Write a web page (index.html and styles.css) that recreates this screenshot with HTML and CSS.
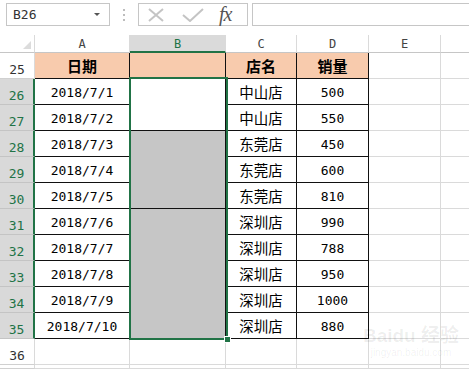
FILE: index.html
```html
<!DOCTYPE html>
<html lang="zh-CN">
<head>
    <meta charset="UTF-8">
    <title>店铺销量表</title>
    <link rel="stylesheet" href="styles.css">
</head>
<body>

    <div class="formula-bar">
        <div class="name-box">
            <span>B26</span>
            <span class="drop"></span>
        </div>
        <div class="grip">
            <svg width="3" height="12" viewBox="0 0 3 12"><rect x="0" y="0" width="2" height="2"/><rect x="0" y="5" width="2" height="2"/><rect x="0" y="10" width="2" height="2"/></svg>
        </div>
        <div class="fx-box">
            <svg class="btn-cancel" width="16" height="14" viewBox="0 0 16 14"><path d="M1 1 L15 13 M15 1 L1 13"/></svg>
            <svg class="btn-enter" width="22" height="14" viewBox="0 0 22 14"><path d="M1 7 L8 13 L21 1"/></svg>
            <span class="fx">fx</span>
        </div>
        <div class="formula-input"></div>
    </div>

    <div class="sheet" id="sheet">
        <div class="selection"><span class="fill-handle"></span></div>
    </div>

    <div class="watermark">
        <div class="wm-big">Bai<span>du</span> 经验</div>
        <div class="wm-small">jingyan.baidu.com</div>
    </div>

    <script>
        const sales = [
            { date: "2018/7/1", store: "中山店", qty: "500" },
            { date: "2018/7/2", store: "中山店", qty: "550" },
            { date: "2018/7/3", store: "东莞店", qty: "450" },
            { date: "2018/7/4", store: "东莞店", qty: "600" },
            { date: "2018/7/5", store: "东莞店", qty: "810" },
            { date: "2018/7/6", store: "深圳店", qty: "990" },
            { date: "2018/7/7", store: "深圳店", qty: "788" },
            { date: "2018/7/8", store: "深圳店", qty: "950" },
            { date: "2018/7/9", store: "深圳店", qty: "1000" },
            { date: "2018/7/10", store: "深圳店", qty: "880" }
        ];

        // merged blocks in column B, keyed by first row index
        const merged = {
            0: "merge-2 blank",
            2: "merge-3 shade",
            5: "merge-5 shade"
        };

        const sheet = document.getElementById('sheet');

        function cell(cls, text) {
            const el = document.createElement('div');
            el.className = 'c ' + cls;
            if (text) el.textContent = text;
            sheet.appendChild(el);
            return el;
        }

        // column headers
        cell('corner', '');
        ['A', 'B', 'C', 'D', 'E', ''].forEach(letter => {
            cell(letter === 'B' ? 'col-head active' : 'col-head', letter);
        });

        // row 25: table header
        cell('row-head', '25');
        cell('data head', '日期');
        cell('data head', '');
        cell('data head', '店名');
        cell('data head', '销量');
        cell('', '');
        cell('', '');

        sales.forEach((row, i) => {
            cell('row-head active', String(26 + i));
            cell('data num', row.date);
            if (merged[i]) cell('data ' + merged[i], '');
            cell('data zh', row.store);
            cell('data num', row.qty);
            cell('', '');
            cell('', '');
        });

        // empty row below the table
        cell('row-head', '36');
        for (let k = 0; k < 6; k++) cell('', '');

        // top sliver of row 37 at the window edge
        cell('row-head', '');
        for (let k = 0; k < 6; k++) cell('', '');
    </script>

</body>
</html>
```

FILE: styles.css
```css
body {
    margin: 0;
    width: 469px;
    height: 369px;
    overflow: hidden;
    position: relative;
    background-color: #fff;
    font-family: "DejaVu Sans Mono", "Noto Sans CJK SC", monospace;
    color: #000;
}

/* formula bar */
.formula-bar {
    display: flex;
    align-items: flex-start;
    height: 35px;
    padding-top: 3px;
    box-sizing: border-box;
}
.name-box {
    margin-left: 6px;
    width: 104px;
    height: 23px;
    box-sizing: border-box;
    border: 1px solid #c6c6c6;
    display: flex;
    align-items: center;
    justify-content: space-between;
    padding: 0 9px 0 6px;
    font-size: 13px;
    color: #333;
}
.drop {
    width: 0;
    height: 0;
    border-left: 3px solid transparent;
    border-right: 3px solid transparent;
    border-top: 3px solid #555;
}
.grip {
    width: 28px;
    height: 23px;
    display: flex;
    align-items: center;
    justify-content: center;
}
.grip svg {
    fill: #bdbdbd;
}
.fx-box {
    width: 110px;
    height: 23px;
    box-sizing: border-box;
    border: 1px solid #c6c6c6;
    display: flex;
    align-items: center;
    padding-left: 9px;
}
.fx-box svg {
    fill: none;
    stroke: #c4c4c4;
    stroke-width: 2;
}
.btn-enter {
    margin-left: 18px;
}
.fx {
    margin-left: 15px;
    font-family: "Liberation Serif", serif;
    font-style: italic;
    font-size: 20px;
    color: #555;
    letter-spacing: -1px;
}
.formula-input {
    flex: 1;
    margin-left: 4px;
    height: 23px;
    box-sizing: border-box;
    border: 1px solid #c6c6c6;
    border-right: none;
}

/* worksheet grid */
.sheet {
    position: relative;
    display: grid;
    grid-template-columns: 35px 95px 96px 71px 72px 72px 40px;
    grid-template-rows: 18px repeat(12, 26px) 4px;
}
.c {
    box-sizing: border-box;
    border-right: 1px solid #dadada;
    border-bottom: 1px solid #dadada;
    display: flex;
    align-items: center;
    justify-content: center;
    white-space: nowrap;
}
.corner {
    position: relative;
    border-bottom-color: #c6c6c6;
}
.corner::after {
    content: "";
    position: absolute;
    right: 3px;
    bottom: 3px;
    border-left: 8px solid transparent;
    border-bottom: 8px solid #dcdcdc;
}
.col-head {
    font-size: 12px;
    color: #444;
    border-bottom-color: #c6c6c6;
    padding-top: 1px;
}
.col-head.active {
    background-color: #dadada;
    color: #217346;
    border-bottom: 2px solid #217346;
}
.row-head {
    align-items: flex-end;
    padding-bottom: 1px;
    font-size: 13px;
    color: #333;
    border-bottom-color: #d0d0d0;
}
.row-head.active {
    background-color: #d9d9d9;
    color: #217346;
    border-bottom-color: #c4c4c4;
    border-right: 2px solid #217346;
}

/* data table */
.data {
    border-right-color: #111;
    border-bottom-color: #111;
    padding-top: 2px;
}
.head {
    background-color: #f8cbad;
    font-family: "Noto Sans CJK SC", sans-serif;
    font-weight: bold;
    font-size: 15px;
    padding-top: 0;
}
.num {
    font-size: 13px;
}
.zh {
    font-family: "Noto Sans CJK SC", sans-serif;
    font-size: 14.5px;
    padding-top: 0;
}
.merge-2 {
    grid-row: span 2;
}
.merge-3 {
    grid-row: span 3;
}
.merge-5 {
    grid-row: span 5;
}
.shade {
    background-color: #c6c6c6;
}
.blank {
    background-color: #fff;
}

/* selection outline over B26:B35 */
.selection {
    position: absolute;
    left: 129px;
    top: 42px;
    width: 99px;
    height: 263px;
    box-sizing: border-box;
    border: 2px solid #217346;
}
.fill-handle {
    position: absolute;
    right: -5px;
    bottom: -5px;
    width: 5px;
    height: 5px;
    background-color: #217346;
    border: 1px solid #fff;
}

/* faint site watermark */
.watermark {
    position: absolute;
    right: 10px;
    bottom: 10px;
    text-align: center;
    color: rgba(0, 0, 0, 0.07);
    font-family: "Liberation Sans", "Noto Sans CJK SC", sans-serif;
}
.wm-big {
    font-size: 19px;
    font-weight: bold;
    line-height: 22px;
}
.wm-small {
    font-size: 10px;
    line-height: 12px;
}
```
